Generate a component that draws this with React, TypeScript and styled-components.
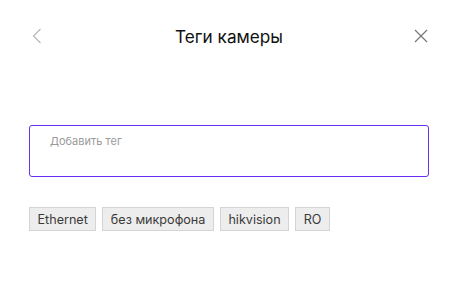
import styled, { createGlobalStyle } from "styled-components";

const GlobalStyle = createGlobalStyle`
  html, body {
    margin: 0;
    padding: 0;
    background: #fff;
  }
  body {
    font-family: Inter, "Noto Sans", sans-serif;
    -webkit-font-smoothing: antialiased;
  }
`;

const TAGS = ["Ethernet", "без микрофона", "hikvision", "RO"];

export default function App() {
  return (
    <Modal>
      <GlobalStyle />
      <Header>
        <IconButton aria-label="Назад">
          <svg width="10" height="16" viewBox="0 0 10 16" fill="none">
            <path d="M8.5 1 1.5 8l7 7" stroke="#b8b8b8" strokeWidth="1.2" />
          </svg>
        </IconButton>
        <Title>Теги камеры</Title>
        <IconButton aria-label="Закрыть">
          <svg width="14" height="14" viewBox="0 0 14 14" fill="none">
            <path d="M1 1l12 12M13 1 1 13" stroke="#777" strokeWidth="1.2" />
          </svg>
        </IconButton>
      </Header>

      <TagInput placeholder="Добавить тег" />

      <TagList>
        {TAGS.map((tag) => (
          <Tag key={tag}>{tag}</Tag>
        ))}
      </TagList>
    </Modal>
  );
}

const Modal = styled.div`
  width: 457px;
  height: 285px;
  box-sizing: border-box;
  padding: 23px 28px 0 29px;
  background: #fff;
`;

const Header = styled.div`
  display: flex;
  align-items: center;
  justify-content: space-between;
  height: 26px;
`;

const IconButton = styled.button`
  display: flex;
  align-items: center;
  justify-content: center;
  width: 16px;
  height: 26px;
  padding: 0;
  border: none;
  background: none;
  cursor: pointer;
`;

const Title = styled.h1`
  margin: 0;
  font-size: 17.2px;
  font-weight: 400;
  color: #111;
`;

const TagInput = styled.textarea`
  display: block;
  box-sizing: border-box;
  width: 400px;
  height: 52px;
  margin-top: 76px;
  padding: 8px 20px;
  border: 1.5px solid #6a2ff2;
  border-radius: 3px;
  outline: none;
  resize: none;
  font-family: Inter, "Noto Sans", sans-serif;
  font-size: 11px;
  color: #333;

  &::placeholder {
    color: #9a9a9a;
  }
`;

const TagList = styled.div`
  display: flex;
  flex-wrap: wrap;
  gap: 6px;
  margin-top: 30px;
`;

const Tag = styled.span`
  display: inline-flex;
  align-items: center;
  box-sizing: border-box;
  height: 24px;
  padding: 0 7.5px;
  border: 1px solid #d4d4d4;
  background: #ededed;
  font-size: 12.6px;
  color: #3a3a3a;
`;
